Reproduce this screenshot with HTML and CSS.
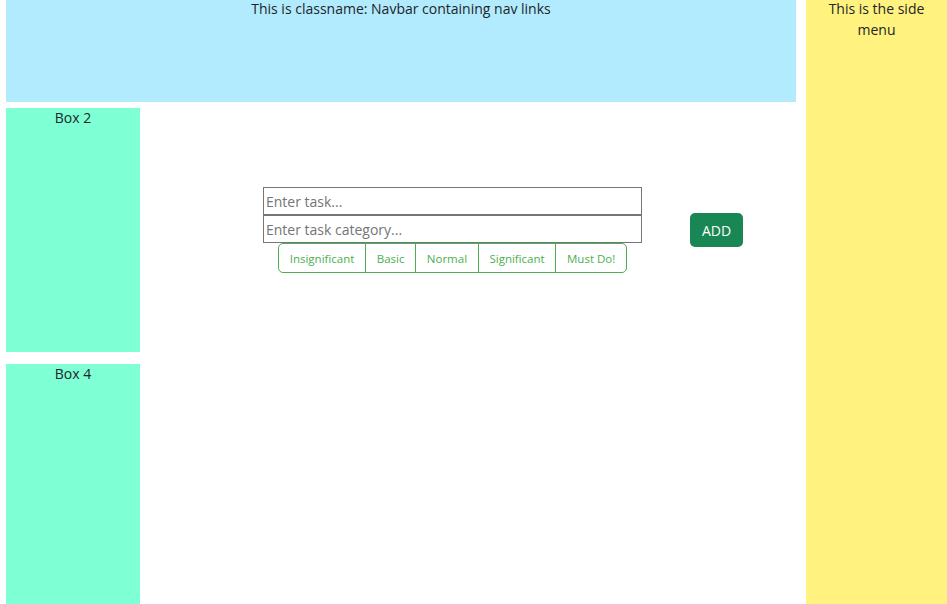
FILE: index.html
```html
<!DOCTYPE html>
<html lang="en">
<head>
<meta charset="utf-8">
<title>Tasks</title>
<link rel="stylesheet" href="styles.css">
</head>
<body>
<div class="page">
  <div class="main">
    <nav class="navbar"><p class="label">This is classname: Navbar containing nav links</p></nav>
    <div class="content">
      <div class="boxes">
        <div class="box box-2">Box 2</div>
        <div class="box box-4">Box 4</div>
      </div>
      <div class="workspace">
        <form class="task-form">
          <div class="fields">
            <input class="field" type="text" placeholder="Enter task...">
            <input class="field" type="text" placeholder="Enter task category...">
            <div class="priority">
              <button type="button" class="prio">Insignificant</button>
              <button type="button" class="prio">Basic</button>
              <button type="button" class="prio">Normal</button>
              <button type="button" class="prio">Significant</button>
              <button type="button" class="prio">Must Do!</button>
            </div>
          </div>
          <button type="button" class="add">ADD</button>
        </form>
      </div>
    </div>
  </div>
  <aside class="side"><p class="label">This is the side menu</p></aside>
</div>
</body>
</html>
```
FILE: styles.css
```css
html, body {
  margin: 0;
  padding: 0;
  background: #ffffff;
}
body {
  font-family: "Open Sans", "Noto Sans", sans-serif;
  font-size: 14px;
  line-height: 21px;
  color: #212529;
}
.page {
  display: flex;
  gap: 10px;
  padding-left: 6px;
  height: 604px;
  overflow: hidden;
}
.main {
  width: 790px;
  flex: none;
  display: flex;
  flex-direction: column;
}
.label {
  margin: -2px 0 0;
}
.navbar {
  height: 102px;
  background: #b2ebfd;
  text-align: center;
}
.content {
  margin-top: 6px;
  display: flex;
  flex: 1;
}
.boxes {
  width: 134px;
  flex: none;
  display: flex;
  flex-direction: column;
  gap: 12px;
}
.box {
  background: #7fffd4;
  text-align: center;
  line-height: 19px;
  box-sizing: border-box;
}
.box-2 {
  height: 244px;
}
.box-4 {
  flex: 1;
}
.workspace {
  flex: 1;
  padding: 79px 0 0 123px;
}
.task-form {
  display: flex;
  align-items: center;
  gap: 48px;
}
.fields {
  width: 379px;
  display: flex;
  flex-direction: column;
  align-items: center;
}
.field {
  display: block;
  width: 100%;
  height: 28px;
  box-sizing: border-box;
  margin: 0;
  padding: 1px 2px;
  border: 1px solid #767676;
  border-radius: 0;
  font-family: "Open Sans", "Noto Sans", sans-serif;
  font-size: 14px;
  color: #212529;
  background: #fff;
}
.field::placeholder {
  color: #757575;
}
.priority {
  display: flex;
}
.prio {
  height: 30px;
  margin: 0 0 0 -1px;
  padding: 0 10.7px;
  border: 1px solid #4caf50;
  background: #fff;
  color: #4caf50;
  font-family: "Open Sans", "Noto Sans", sans-serif;
  font-size: 11.5px;
  border-radius: 0;
  cursor: pointer;
}
.prio:first-child {
  margin-left: 0;
  border-radius: 5px 0 0 5px;
}
.prio:last-child {
  border-radius: 0 5px 5px 0;
}
.add {
  height: 34px;
  padding: 0 12px;
  border: none;
  border-radius: 5px;
  background: #198754;
  color: #ffffff;
  font-family: "Open Sans", "Noto Sans", sans-serif;
  font-size: 14px;
  cursor: pointer;
}
.side {
  flex: 1;
  background: #fff27e;
  text-align: center;
  padding: 0 12px;
}
```
